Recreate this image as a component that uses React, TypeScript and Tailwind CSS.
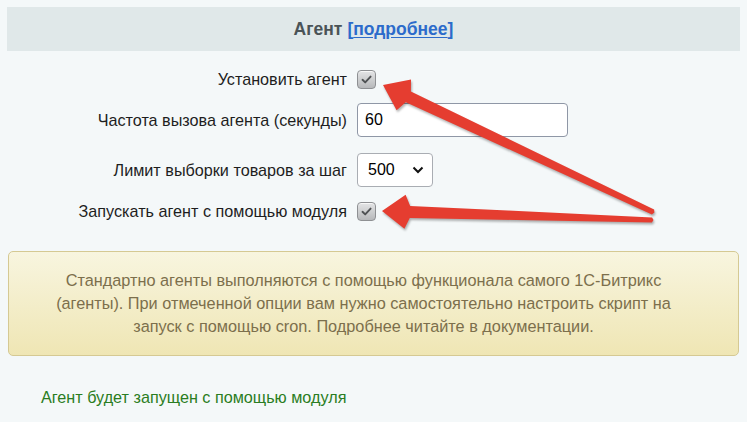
import React from "react"

type Pt = [number, number]

// build a tapered arrow polygon from tail to tip
function arrowPoints(tail: Pt, tip: Pt) {
  const dx = tail[0] - tip[0]
  const dy = tail[1] - tip[1]
  const len = Math.hypot(dx, dy)
  const d: Pt = [dx / len, dy / len]
  const n: Pt = [-d[1], d[0]]
  const at = (along: number, side: number): Pt => [
    tip[0] + d[0] * along + n[0] * side,
    tip[1] + d[1] * along + n[1] * side,
  ]
  const pts: Pt[] = [
    tip,
    at(23, 17),
    at(28, 6),
    at(len, 2.6),
    at(len + 1.5, 0),
    at(len, -2.6),
    at(28, -6),
    at(23, -17),
  ]
  return pts.map(p => `${p[0].toFixed(1)},${p[1].toFixed(1)}`).join(" ")
}

function Checkbox() {
  return (
    <span className="flex h-[19px] w-[19px] items-center justify-center rounded-[4px] border border-[#8e9093] bg-gradient-to-b from-[#e4e5e6] to-[#b7b9bb] shadow-[inset_0_1px_0_rgba(255,255,255,0.7)]">
      <svg width="13" height="13" viewBox="0 0 13 13">
        <path d="M2.5 6.8 L5.2 9.4 L10.6 3.6" fill="none" stroke="#4f5254" strokeWidth="1.9" strokeLinecap="round" strokeLinejoin="round" />
      </svg>
    </span>
  )
}

function Row({ label, children, className = "" }: { label: string; children: React.ReactNode; className?: string }) {
  return (
    <div className={`flex items-center ${className}`}>
      <div className="w-[347px] text-right text-[16.2px] text-[#1e1e1e]">{label}</div>
      <div className="ml-[10px] flex items-center">{children}</div>
    </div>
  )
}

export default function App() {
  return (
    <div className="relative h-[422px] w-[747px] overflow-hidden bg-[#f4f8f9] pt-[7px] font-['Liberation_Sans',Arial,sans-serif]">
      {/* header */}
      <div className="mx-[7px] flex h-[44px] items-center justify-center bg-[#e0e8e9] text-[17.5px] font-bold text-[#4a5357]">
        <span>Агент</span>
        <span className="ml-[5px] text-[#2c6bcb]">
          [<span className="underline underline-offset-2">подробнее</span>]
        </span>
      </div>

      {/* settings */}
      <div className="mt-[8px] flex flex-col">
        <Row label="Установить агент" className="h-[40px]">
          <Checkbox />
        </Row>
        <Row label="Частота вызова агента (секунды)" className="h-[42px]">
          <input
            readOnly
            value="60"
            className="h-[34px] w-[211px] rounded-[4px] border border-[#8f97a6] bg-white px-[7px] text-[16px] text-black outline-none"
          />
        </Row>
        <Row label="Лимит выборки товаров за шаг" className="mt-[8px] h-[42px]">
          <div className="flex h-[34px] w-[76px] items-center justify-between rounded-[4px] border border-[#a9adb3] bg-white pl-[10px] pr-[8px] text-[16px] text-black">
            <span>500</span>
            <svg width="12" height="8" viewBox="0 0 12 8">
              <path d="M1.5 1.5 L6 6 L10.5 1.5" fill="none" stroke="#111" strokeWidth="2" />
            </svg>
          </div>
        </Row>
        <Row label="Запускать агент с помощью модуля" className="h-[40px]">
          <Checkbox />
        </Row>
      </div>

      {/* note */}
      <div className="mx-[8px] mt-[20px] flex h-[105px] items-center justify-center rounded-[5px] border border-[#d5c993] bg-gradient-to-b from-[#f8f5df] to-[#efe6b4] pl-[30px] pr-[50px] text-center text-[16.3px] leading-[23px] text-[#7c6f4c]">
        <p>
          Стандартно агенты выполняются с помощью функционала самого 1С-Битрикс (агенты). При отмеченной опции вам нужно
          самостоятельно настроить скрипт на запуск с помощью cron. Подробнее читайте в документации.
        </p>
      </div>

      <div className="mt-[29px] pl-[41px] text-[16.2px] text-[#2a7d22]">Агент будет запущен с помощью модуля</div>

      {/* red arrows drawn over the form */}
      <svg className="pointer-events-none absolute left-0 top-0 drop-shadow-[1px_2px_1px_rgba(0,0,0,0.3)]" width="747" height="422">
        <polygon points={arrowPoints([653, 212], [383, 85])} fill="#e53d30" />
        <polygon points={arrowPoints([652, 220], [382, 211])} fill="#e53d30" />
      </svg>
    </div>
  )
}
